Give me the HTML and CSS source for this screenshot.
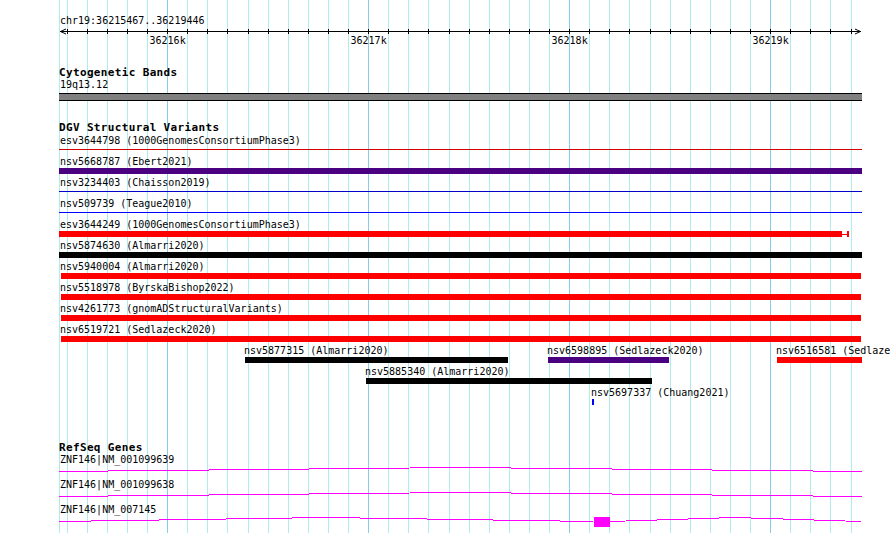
FILE: index.html
```html
<!DOCTYPE html>
<html lang="en">
<head>
    <meta charset="UTF-8">
    <meta name="viewport" content="width=device-width, initial-scale=1.0">
    <title>chr19:36215467..36219446</title>
    <link rel="stylesheet" href="styles.css">
</head>
<body>
<div class="view">
    <!-- grid: one line every 100bp, darker every 1kb -->
    <svg class="grid" width="890" height="533">
        <path class="minor" d="M59.5 0V533M67.5 0V533M87.5 0V533M107.5 0V533M127.5 0V533M147.5 0V533M187.5 0V533M207.5 0V533M227.5 0V533M248.5 0V533M268.5 0V533M288.5 0V533M308.5 0V533M328.5 0V533M348.5 0V533M388.5 0V533M408.5 0V533M428.5 0V533M449.5 0V533M469.5 0V533M489.5 0V533M509.5 0V533M529.5 0V533M549.5 0V533M589.5 0V533M609.5 0V533M629.5 0V533M650.5 0V533M670.5 0V533M690.5 0V533M710.5 0V533M730.5 0V533M750.5 0V533M790.5 0V533M810.5 0V533M830.5 0V533M851.5 0V533"/>
        <path class="major" d="M167.5 0V533M368.5 0V533M569.5 0V533M770.5 0V533"/>
    </svg>

    <div class="ruler">
        <div class="locus">chr19:36215467..36219446</div>
        <svg class="scale" width="803" height="20">
            <path class="axis" d="M1 4.5H802"/>
            <path class="arrow" d="M7 2L1.5 4.5L7 7M796 2L801.5 4.5L796 7"/>
            <path class="ticks" d="M8.5 2V7M28.5 2V7M48.5 2V7M68.5 2V7M88.5 2V7M108.5 2V7M128.5 2V7M148.5 2V7M168.5 2V7M189.5 2V7M209.5 2V7M229.5 2V7M249.5 2V7M269.5 2V7M289.5 2V7M309.5 2V7M329.5 2V7M349.5 2V7M369.5 2V7M390.5 2V7M410.5 2V7M430.5 2V7M450.5 2V7M470.5 2V7M490.5 2V7M510.5 2V7M530.5 2V7M550.5 2V7M570.5 2V7M591.5 2V7M611.5 2V7M631.5 2V7M651.5 2V7M671.5 2V7M691.5 2V7M711.5 2V7M731.5 2V7M751.5 2V7M771.5 2V7M792.5 2V7"/>
            <text x="108.6" y="17">36216k</text>
            <text x="309.6" y="17">36217k</text>
            <text x="510.6" y="17">36218k</text>
            <text x="711.6" y="17">36219k</text>
        </svg>
    </div>

    <div class="track cytobands">
        <div class="track-name">Cytogenetic Bands</div>
        <div class="label">19q13.12</div>
        <div class="band"></div>
    </div>

    <div class="track dgv">
        <div class="track-name">DGV Structural Variants</div>
        <div class="rows">
            <div class="sv-row">
                <div class="feature full" style="left:0;width:803px">
                    <div class="label">esv3644798 (1000GenomesConsortiumPhase3)</div>
                    <div class="glyph"><div class="bar thin red-dark"></div></div>
                </div>
            </div>
            <div class="sv-row">
                <div class="feature full" style="left:0;width:803px">
                    <div class="label">nsv5668787 (Ebert2021)</div>
                    <div class="glyph"><div class="bar purple"></div></div>
                </div>
            </div>
            <div class="sv-row">
                <div class="feature full" style="left:0;width:803px">
                    <div class="label">nsv3234403 (Chaisson2019)</div>
                    <div class="glyph"><div class="bar thin blue-dark"></div></div>
                </div>
            </div>
            <div class="sv-row">
                <div class="feature full" style="left:0;width:803px">
                    <div class="label">nsv509739 (Teague2010)</div>
                    <div class="glyph"><div class="bar thin blue"></div></div>
                </div>
            </div>
            <div class="sv-row">
                <div class="feature full" style="left:0;width:790px">
                    <div class="label">esv3644249 (1000GenomesConsortiumPhase3)</div>
                    <div class="glyph">
                        <div class="bar red" style="width:783px"></div>
                        <div class="ci-line red"></div>
                        <div class="ci-end red"></div>
                    </div>
                </div>
            </div>
            <div class="sv-row">
                <div class="feature full" style="left:0;width:803px">
                    <div class="label">nsv5874630 (Almarri2020)</div>
                    <div class="glyph"><div class="bar black"></div></div>
                </div>
            </div>
            <div class="sv-row">
                <div class="feature" style="left:2px;width:800px">
                    <div class="label">nsv5940004 (Almarri2020)</div>
                    <div class="glyph"><div class="bar red"></div></div>
                </div>
            </div>
            <div class="sv-row">
                <div class="feature" style="left:2px;width:800px">
                    <div class="label">nsv5518978 (ByrskaBishop2022)</div>
                    <div class="glyph"><div class="bar red"></div></div>
                </div>
            </div>
            <div class="sv-row">
                <div class="feature" style="left:2px;width:800px">
                    <div class="label">nsv4261773 (gnomADStructuralVariants)</div>
                    <div class="glyph"><div class="bar red"></div></div>
                </div>
            </div>
            <div class="sv-row">
                <div class="feature" style="left:2px;width:800px">
                    <div class="label">nsv6519721 (Sedlazeck2020)</div>
                    <div class="glyph"><div class="bar red"></div></div>
                </div>
            </div>
            <div class="sv-row">
                <div class="feature" style="left:186px;width:263px">
                    <div class="label">nsv5877315 (Almarri2020)</div>
                    <div class="glyph"><div class="bar black"></div></div>
                </div>
                <div class="feature" style="left:489px;width:121px">
                    <div class="label">nsv6598895 (Sedlazeck2020)</div>
                    <div class="glyph"><div class="bar purple"></div></div>
                </div>
                <div class="feature" style="left:718px;width:85px">
                    <div class="label">nsv6516581 (Sedlazeck2020)</div>
                    <div class="glyph"><div class="bar red"></div></div>
                </div>
            </div>
            <div class="sv-row">
                <div class="feature" style="left:307px;width:286px">
                    <div class="label">nsv5885340 (Almarri2020)</div>
                    <div class="glyph"><div class="bar black"></div></div>
                </div>
            </div>
            <div class="sv-row">
                <div class="feature" style="left:533px;width:2px">
                    <div class="label">nsv5697337 (Chuang2021)</div>
                    <div class="glyph"><div class="bar blue"></div></div>
                </div>
            </div>
        </div>
    </div>

    <div class="track refseq">
        <div class="track-name">RefSeq Genes</div>
        <div class="gene-row">
            <div class="label">ZNF146|NM_001099639</div>
            <svg class="gene" width="803" height="13">
                <polyline points="0,5.5 401,1.5 803,5.5"/>
            </svg>
        </div>
        <div class="gene-row">
            <div class="label">ZNF146|NM_001099638</div>
            <svg class="gene" width="803" height="13">
                <polyline points="0,5.5 401,1.5 803,5.5"/>
            </svg>
        </div>
        <div class="gene-row">
            <div class="label">ZNF146|NM_007145</div>
            <svg class="gene" width="803" height="13">
                <polyline points="0,5.5 267,1.5 534,5.5"/>
                <rect x="535" y="1" width="16" height="10"/>
                <polyline points="551,5.5 676.5,1.5 802,5.5"/>
            </svg>
        </div>
    </div>
</div>
</body>
</html>
```

FILE: styles.css
```css
*{margin:0;padding:0}
html, body{
    background-color: #fff;
    overflow: hidden;
}
body{
    font-family: "DejaVu Sans Mono", monospace;
    font-size: 10px;
    line-height: 12px;
    color: #000;
}
.view{
    position: relative;
    z-index: 0;
    width: 890px;
    height: 533px;
    overflow: hidden;
}

/* grid behind everything */
.grid{
    position: absolute;
    top: 0;
    left: 0;
    z-index: -1;
    shape-rendering: crispEdges;
}
.grid .minor{ stroke: #aeecf0; stroke-width: 1; }
.grid .major{ stroke: #86cdea; stroke-width: 1; }

/* ruler */
.ruler{
    margin-left: 59px;
    width: 803px;
    padding-top: 15px;
}
.locus{ padding-left: 1px; white-space: nowrap; }
.scale{ display: block; overflow: visible; }
.scale .axis, .scale .ticks{
    stroke: #000;
    stroke-width: 1;
    shape-rendering: crispEdges;
}
.scale .arrow{ stroke: #000; stroke-width: 1; fill: none; }
.scale text{
    font-family: "DejaVu Sans Mono", monospace;
    font-size: 10px;
    text-anchor: middle;
    fill: #000;
}

/* tracks */
.track{
    margin-left: 59px;
    width: 803px;
}
.track-name{
    font-weight: bold;
    font-size: 11px;
    letter-spacing: 0.35px;
    line-height: 12px;
    white-space: nowrap;
}
.label{
    white-space: nowrap;
    padding-left: 1px;
}

.cytobands{ margin-top: 20px; }
.band{
    margin-top: 2px;
    height: 6px;
    background-color: #808080;
    border-top: 1px solid #000;
    border-bottom: 1px solid #000;
}

.dgv{ margin-top: 21px; }
.dgv .rows{ padding-top: 1px; }
.sv-row{
    position: relative;
    height: 21px;
}
.feature{
    position: absolute;
    top: 0;
}
.feature .label{
    padding-left: 0;
    margin-left: -1px;
}
.feature.full .label{ margin-left: 1px; }
.glyph{
    display: flex;
    align-items: center;
    height: 6px;
}
.bar{
    flex: 1;
    height: 6px;
}
.glyph .bar[style]{ flex: none; }
.bar.thin{
    height: 1px;
    align-self: flex-start;
    margin-top: 2px;
}
.ci-line{ width: 5px; height: 1px; }
.ci-end{ width: 2px; height: 6px; }

.red{ background-color: #ff0000; }
.red-dark{ background-color: #d40000; }
.purple{ background-color: #4b0082; }
.blue{ background-color: #0000ff; }
.blue-dark{ background-color: #0000c8; }
.black{ background-color: #000; }

.refseq{ margin-top: 34px; }
.gene-row{ height: 25px; }
.gene{
    display: block;
    shape-rendering: crispEdges;
}
.gene polyline{
    fill: none;
    stroke: #ff00ff;
    stroke-width: 1;
}
.gene rect{ fill: #ff00ff; }
```
